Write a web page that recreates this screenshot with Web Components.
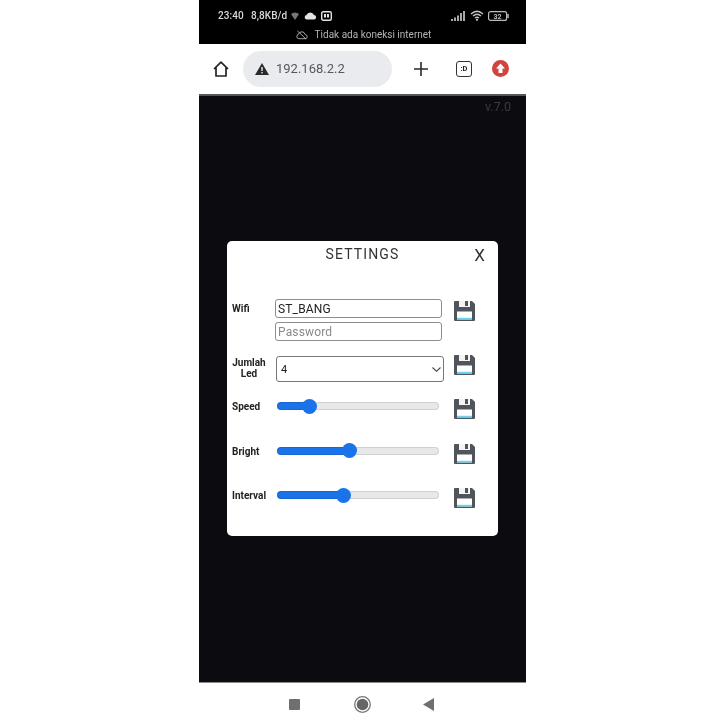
<!DOCTYPE html>
<html><head><meta charset="utf-8"><title>Settings</title>
<style>
html,body{margin:0;height:100%;background:#fff}
body{font-family:Roboto,"Liberation Sans",sans-serif;overflow:hidden}
#wrap{display:flex;justify-content:flex-start;padding-left:199px;height:726px;box-sizing:border-box}
phone-frame{filter:blur(.45px)}
</style></head><body>
<div id="wrap">
<phone-frame>
  <status-bar slot="status"></status-bar>
  <browser-toolbar slot="toolbar" address="192.168.2.2"></browser-toolbar>
  <settings-modal>
    <setting-row label="Wifi" kind="wifi" icon-top="2">
      <text-field value="ST_BANG"></text-field>
      <text-field placeholder="Password"></text-field>
    </setting-row>
    <setting-row label="Jumlah Led" kind="select" icon-top="-1" center-label>
      <select-field value="4"></select-field>
    </setting-row>
    <setting-row label="Speed" kind="slider" icon-top="3"><range-field value="17"></range-field></setting-row>
    <setting-row label="Bright" kind="slider" icon-top="3"><range-field value="44"></range-field></setting-row>
    <setting-row label="Interval" kind="slider" icon-top="3"><range-field value="40"></range-field></setting-row>
  </settings-modal>
  <nav-bar slot="nav"></nav-bar>
</phone-frame>
</div>
<script>
function define(name, html){
  customElements.define(name, class extends HTMLElement{
    constructor(){super();this.attachShadow({mode:'open'});}
    connectedCallback(){
      const tpl=document.createElement('template');
      tpl.innerHTML=typeof html==='function'?html(this):html;
      this.shadowRoot.replaceChildren(tpl.content.cloneNode(true));
    }
  });
}
define('phone-frame',`<style>
:host{display:flex;flex-direction:column;width:327px;height:726px}
main{flex:1;position:relative;background:#0b0b10;display:flex;align-items:center;justify-content:center;min-height:0;padding-bottom:1px}
.ver{position:absolute;top:3px;right:15px;font-size:12.500px;color:#3a3a3f}
</style>
<slot name="status"></slot><slot name="toolbar"></slot>
<main><span class="ver">v.7.0</span><slot></slot></main>
<slot name="nav"></slot>`);

define('status-bar',`<style>
:host{display:block;height:44px;background:#000;color:#d8d8d8;box-sizing:border-box;padding:9px 17px 0 19px;font-size:10px}
.top{display:flex;align-items:center;height:13px;font-weight:500}
.top b{font-weight:500;margin-right:7px;letter-spacing:.1px}
.top svg{display:block}
.grow{flex:1}
.msg{display:flex;justify-content:center;align-items:center;gap:7px;margin-top:6px;height:13px;color:#b4b4b4;font-size:10px}
</style>
<div class="top"><b>23:40</b><b style="margin-right:2px">8,8KB/d</b>
<svg width="10" height="10" viewBox="0 0 10 10" style="margin-left:1px"><path d="M1 3Q5 0 9 3L5 9Z" fill="#777"/></svg>
<svg width="13" height="9" viewBox="0 0 13 9" style="margin-left:4px"><path d="M2.5 8.500A2.300 2.300 0 0 1 2.500 4 4 4 0 0 1 10 4 2.300 2.300 0 0 1 10.500 8.500Z" fill="#e4e4e4"/></svg>
<svg width="11" height="10" viewBox="0 0 11 10" style="margin-left:4px"><rect x=".7" y=".7" width="9.600" height="8.600" rx="1.500" fill="#000" stroke="#e4e4e4" stroke-width="1.400"/><rect x="3" y="3" width="2" height="3.500" fill="#e4e4e4"/><rect x="6" y="3" width="2" height="3.500" fill="#e4e4e4"/></svg>
<span class="grow"></span>
<svg width="14" height="10" viewBox="0 0 14 10"><path d="M0 10h2V8H0zM3 10h2V6.500H3zM6 10h2V4.500H6zM9 10h2V2H9zM12 10h2V0h-2z" fill="#aaa"/></svg>
<svg width="14" height="11" viewBox="0 0 14 11" style="margin-left:5px"><path d="M1 4Q7-1.500 13 4M3 6Q7 2.500 11 6M5 8Q7 6.500 9 8" fill="none" stroke="#c4c4c4" stroke-width="1.300"/><circle cx="7" cy="9.800" r="1.100" fill="#c4c4c4"/></svg>
<svg width="21" height="10" viewBox="0 0 21 10" style="margin-left:4px"><rect x=".6" y=".6" width="18" height="8.800" rx="2" fill="none" stroke="#bbb" stroke-width="1.200"/><rect x="19.300" y="3" width="1.500" height="4" fill="#bbb"/><text x="9.500" y="7.600" text-anchor="middle" font-size="7" font-weight="700" fill="#bbb" font-family="Roboto">32</text></svg>
</div>
<div class="msg">
<svg width="12" height="10" viewBox="0 0 13 10"><path d="M3 9A2.300 2.300 0 0 1 2.500 4.500 4 4 0 0 1 6.500 1.500 4 4 0 0 1 10 4.500 2.300 2.300 0 0 1 10.500 9ZM1.500 .5 11 9.500" fill="none" stroke="#b4b4b4" stroke-width="1"/></svg>
<span>Tidak ada koneksi internet</span></div>`);

define('browser-toolbar',el=>`<style>
:host{display:flex;align-items:center;height:52px;box-sizing:border-box;background:#fff;border-bottom:2px solid #55565a;padding:0 0 1px 14px;color:#222}
svg{display:block;flex:none}
.pill{width:149px;height:36px;margin-left:14px;background:#e9ebee;border-radius:18px;display:flex;align-items:center;padding-left:12px;box-sizing:border-box;gap:7px;font-size:13px;color:#55585c}
.tab{width:16px;height:16px;box-sizing:border-box;border:1.500px solid #333;border-radius:3px;font-size:7.500px;font-weight:700;display:flex;align-items:center;justify-content:center;margin-left:28px;color:#222}
</style>
<svg width="16" height="16" viewBox="0 0 16 16"><path d="M1 8 8 1.200 15 8M3 6.300V15H13V6.300" fill="none" stroke="#222" stroke-width="1.700" stroke-linejoin="round"/></svg>
<div class="pill"><svg width="14" height="12" viewBox="0 0 14 12"><path d="M7 0 14 12H0Z" fill="#2b2b2b"/><rect x="6.300" y="4" width="1.400" height="4" fill="#e9ebee"/><rect x="6.300" y="9" width="1.400" height="1.400" fill="#e9ebee"/></svg><span>${el.getAttribute('address')}</span></div>
<svg width="14" height="14" viewBox="0 0 14 14" style="margin-left:22px"><path d="M7 0V14M0 7H14" stroke="#2a2a2a" stroke-width="1.600"/></svg>
<div class="tab">:D</div>
<svg width="17" height="17" viewBox="0 0 17 17" style="margin-left:20px"><circle cx="8.500" cy="8.500" r="8.500" fill="#d2433b"/><path d="M8.500 3.500 13 8.500H10.500V13H6.500V8.500H4Z" fill="#fff"/></svg>`);

define('settings-modal',`<style>
:host{display:block;width:271px;height:295px;box-sizing:border-box;background:#fff;border-radius:5px;padding:0 0 0 5px}
header{position:relative;height:58px;text-align:center;margin-left:-5px;color:#333}
h2{margin:0;padding-top:5px;font-size:14px;font-weight:400;letter-spacing:1.150px;line-height:17px}
.x{position:absolute;right:13px;top:4px;font-size:17px;line-height:20px;font-weight:400}
.rows{display:flex;flex-direction:column}
::slotted(:nth-child(2)){margin-top:15px}
::slotted(:nth-child(3)){margin-top:14px}
::slotted(:nth-child(4)){margin-top:21.500px}
::slotted(:nth-child(5)){margin-top:21.500px}
</style>
<header><h2>SETTINGS</h2><span class="x">X</span></header>
<div class="rows"><slot></slot></div>`);

define('setting-row',el=>{
  const kind=el.getAttribute('kind');
  const top=el.getAttribute('icon-top')||0;
  const center=el.hasAttribute('center-label');
  const labelTop={wifi:4,select:1,slider:1}[kind];
  return `<style>
:host{display:grid;grid-template-columns:43px 169px 21px;align-items:start;color:#222}
.l{font-size:10px;font-weight:700;line-height:11px;width:34px;margin-top:${labelTop}px;${center?'text-align:center;':''}${kind==='slider'?'padding-top:4px;':''}}
.c{display:flex;flex-direction:column;gap:4px}
save-icon{margin:${top}px 0 0 10px}
</style><div class="l">${el.getAttribute('label')}</div><div class="c"><slot></slot></div><save-icon></save-icon>`;
});

define('save-icon',`<style>:host{display:block;width:21px;height:20px}svg{display:block}</style>
<svg width="21" height="20" viewBox="0 0 21 20"><path d="M1 0H18L21 3V19a1 1 0 0 1-1 1H1a1 1 0 0 1-1-1V1a1 1 0 0 1 1-1Z" fill="#50555b"/><rect x="5" y="0" width="11" height="6" fill="#f4f4f4"/><rect x="11" y="0" width="3" height="5" fill="#50555b"/><rect x="3" y="10.500" width="15" height="8" fill="#fff"/><rect x="3" y="16.800" width="15" height="1.700" fill="#6fd0ee"/></svg>`);

define('text-field',el=>{
  const v=el.getAttribute('value'),p=el.getAttribute('placeholder');
  return `<style>:host{display:block;width:167px}
input{display:block;width:100%;height:19px;box-sizing:border-box;border:1.300px solid #8b8d90;border-radius:3px;padding:0 2px;margin:0;font:12px Roboto,sans-serif;letter-spacing:.15px;color:#222;background:#fff;outline:0}
input::placeholder{color:#8a8a8a;opacity:1}</style>
<input type="text" ${v?`value="${v}"`:''} ${p?`placeholder="${p}"`:''}>`;
});

define('select-field',el=>`<style>:host{display:block;position:relative;width:168px;margin-left:1px}
select{-webkit-appearance:none;appearance:none;display:block;width:100%;height:26px;box-sizing:border-box;border:1px solid #777;border-radius:3px;background:#fff;font:11px Roboto,sans-serif;color:#222;margin:0;padding:0 0 0 4px;outline:0}
svg{position:absolute;right:3px;top:11px;pointer-events:none}</style>
<select>${[1,2,3,4,5,6].map(n=>`<option${String(n)===el.getAttribute('value')?' selected':''}>${n}</option>`).join('')}</select>
<svg width="9" height="5" viewBox="0 0 9 5"><path d="M.5.500 4.500 4.300 8.500.500" fill="none" stroke="#444" stroke-width="1.100"/></svg>`);

define('range-field',el=>{
  const v=+el.getAttribute('value');
  const fill=`calc(7.500px + ${v/100} * (100% - 15px))`;
  return `<style>:host{display:block;width:162px;margin-left:2px;height:20px}
input{-webkit-appearance:none;appearance:none;display:block;width:100%;height:15px;margin:2.500px 0;padding:0;background:transparent;outline:0}
input::-webkit-slider-runnable-track{height:8px;border-radius:4px;box-sizing:border-box;background:linear-gradient(to right,#1a73e8 ${fill},#e8e8e8 ${fill});box-shadow:inset 0 0 0 1px rgba(0,0,0,.1)}
input::-webkit-slider-thumb{-webkit-appearance:none;width:15px;height:15px;border-radius:50%;background:#1a73e8;margin-top:-3.500px}
</style><input type="range" min="0" max="100" value="${v}">`;
});

define('nav-bar',`<style>
:host{display:flex;height:44px;background:#fff;border-top:1px solid #8a8a8a;box-sizing:border-box;align-items:center;padding:0 0 0 90px}
svg{display:block;flex:none}
</style>
<svg width="11" height="11" viewBox="0 0 11 11"><rect width="11" height="11" rx="1" fill="#6f6f6f"/></svg>
<svg width="17" height="17" viewBox="0 0 17 17" style="margin-left:54px"><circle cx="8.500" cy="8.500" r="7.800" fill="none" stroke="#777" stroke-width="1.300"/><circle cx="8.500" cy="8.500" r="5.800" fill="#666"/></svg>
<svg width="11" height="13" viewBox="0 0 11 13" style="margin-left:52px"><path d="M0 6.500 11 0V13Z" fill="#6f6f6f"/></svg>`);
</script>
</body></html>
